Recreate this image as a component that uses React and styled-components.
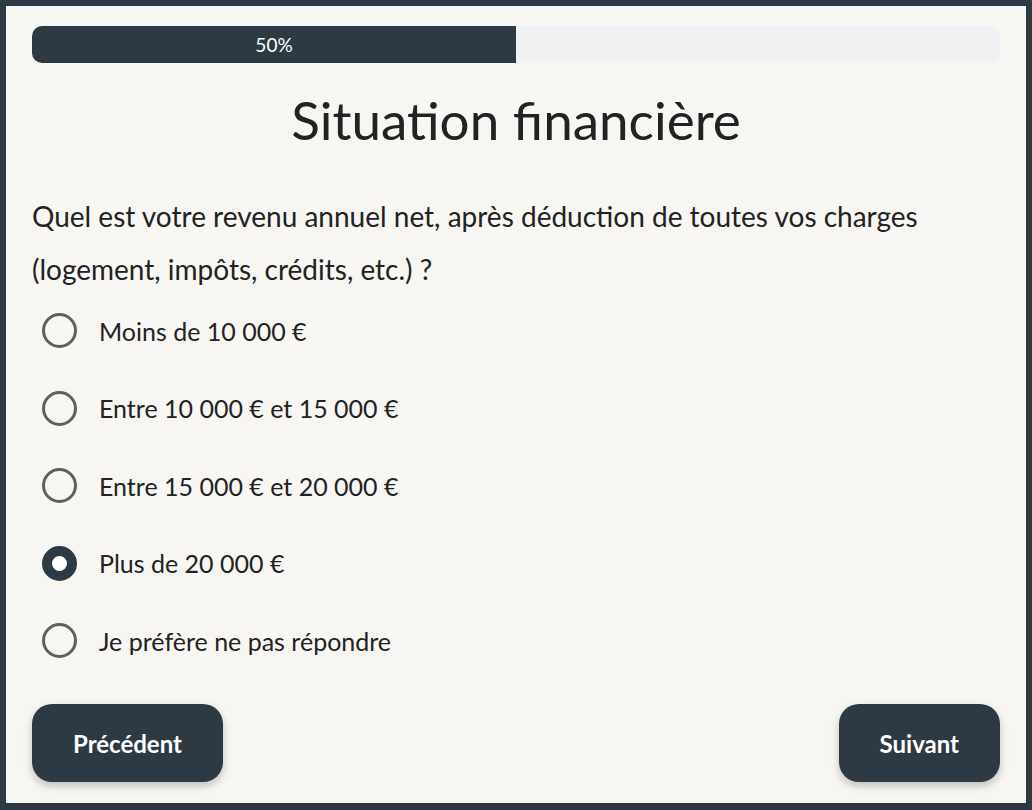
import React, { useState } from 'react';
import styled, { createGlobalStyle } from 'styled-components';

const GlobalStyle = createGlobalStyle`
  html, body {
    margin: 0;
    padding: 0;
    background: #2d3a43;
  }
  body {
    font-family: Lato, "Noto Sans", sans-serif;
    color: #222;
  }
`;

const options = [
  'Moins de 10 000 €',
  'Entre 10 000 € et 15 000 €',
  'Entre 15 000 € et 20 000 €',
  'Plus de 20 000 €',
  'Je préfère ne pas répondre',
];

const App = () => {
  const [selected, setSelected] = useState(3);
  const progress = 50;

  return (
    <>
      <GlobalStyle />
      <Page>
        <Card>
          <Track>
            <Fill style={{ width: `${progress}%` }}>{progress}%</Fill>
          </Track>
          <Title>Situation financière</Title>
          <Question>
            Quel est votre revenu annuel net, après déduction de toutes vos charges
            (logement, impôts, crédits, etc.) ?
          </Question>
          <OptionList>
            {options.map((label, i) => (
              <Option key={label} onClick={() => setSelected(i)}>
                <Radio $checked={selected === i} />
                <span>{label}</span>
              </Option>
            ))}
          </OptionList>
          <Footer>
            <Button>Précédent</Button>
            <Button>Suivant</Button>
          </Footer>
        </Card>
      </Page>
    </>
  );
};

const Page = styled.div`
  padding: 6px;
  min-height: 798px;
`;

const Card = styled.div`
  background: #f7f6f3;
  height: 797px;
  box-sizing: border-box;
  padding: 20px 26px 21px;
  display: flex;
  flex-direction: column;
`;

const Track = styled.div`
  height: 37px;
  border-radius: 10px;
  background: #f0f1f2;
  overflow: hidden;
  display: flex;
`;

const Fill = styled.div`
  background: #2d3a43;
  color: #fff;
  font-size: 19px;
  display: flex;
  align-items: center;
  justify-content: center;
`;

const Title = styled.h1`
  margin: 27px 0 0;
  height: 60px;
  line-height: 60px;
  text-align: center;
  font-size: 53px;
  font-weight: 400;
  color: #222;
`;

const Question = styled.p`
  margin: 40px 0 0;
  font-size: 28px;
  line-height: 53px;
  color: #222;
`;

const OptionList = styled.div`
  display: flex;
  flex-direction: column;
  margin-top: -4px;
`;

const Option = styled.label`
  height: 77.5px;
  display: flex;
  align-items: center;
  gap: 22px;
  padding-left: 10px;
  font-size: 25px;
  color: #222;
  cursor: pointer;
`;

const Radio = styled.span`
  width: 35px;
  height: 35px;
  box-sizing: border-box;
  border-radius: 50%;
  flex-shrink: 0;
  border: ${(p) => (p.$checked ? '10.5px solid #2d3a43' : '3.5px solid #5f5f5f')};
  background: ${(p) => (p.$checked ? '#fff' : 'transparent')};
`;

const Footer = styled.div`
  margin-top: auto;
  display: flex;
  justify-content: space-between;
`;

const Button = styled.button`
  height: 78px;
  padding: 0 41px;
  border: none;
  border-radius: 20px;
  background: #2d3a43;
  color: #fff;
  font-family: Lato, "Noto Sans", sans-serif;
  font-size: 24px;
  font-weight: 700;
  box-shadow: 0 4px 8px rgba(0, 0, 0, 0.22);
  cursor: pointer;
`;

export default App;
